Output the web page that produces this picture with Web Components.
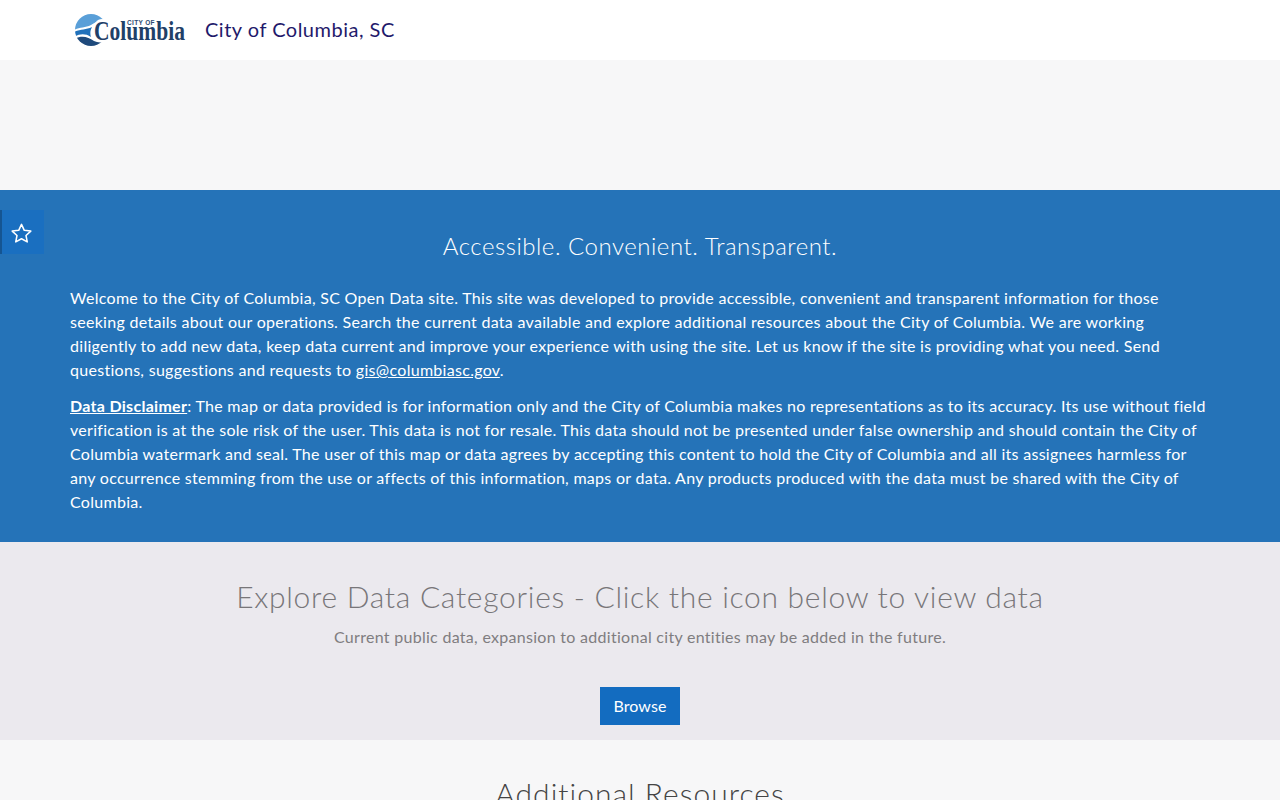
<!DOCTYPE html>
<html lang="en">
<head>
<meta charset="utf-8">
<title>City of Columbia, SC</title>
<style>
  html, body { margin: 0; padding: 0; height: 800px; overflow: hidden; background: #f7f7f8; }
  body { font-family: Lato, "Open Sans", sans-serif; }
  intro-panel a { color: #fff; text-decoration: underline; }
</style>
</head>
<body>
<site-header></site-header>
<hero-spacer></hero-spacer>
<intro-panel>
  <span slot="title">Accessible. Convenient. Transparent.</span>
  <p>Welcome to the City of Columbia, SC Open Data site. This site was developed to provide accessible, convenient and transparent information for those seeking details about our operations. Search the current data available and explore additional resources about the City of Columbia. We are working diligently to add new data, keep data current and improve your experience with using the site. Let us know if the site is providing what you need. Send questions, suggestions and requests to <a href="#">gis@columbiasc.gov</a>.</p>
  <p><a href="#"><b>Data Disclaimer</b></a>: The map or data provided is for information only and the City of Columbia makes no representations as to its accuracy. Its use without field verification is at the sole risk of the user. This data is not for resale. This data should not be presented under false ownership and should contain the City of Columbia watermark and seal. The user of this map or data agrees by accepting this content to hold the City of Columbia and all its assignees harmless for any occurrence stemming from the use or affects of this information, maps or data. Any products produced with the data must be shared with the City of Columbia.</p>
</intro-panel>
<explore-panel></explore-panel>
<resources-panel></resources-panel>

<script>
// ── header ───────────────────────────────────────────────────────────────────
class SiteHeader extends HTMLElement {
  constructor() {
    super()
    this.attachShadow({ mode: 'open' })
    this.shadowRoot.innerHTML = `
      <style>
        :host { display: flex; align-items: center; height: 60px; background: #fff; padding-left: 74px; box-sizing: border-box; }
        .logo { display: block; width: 112px; height: 34px; flex-shrink: 0; }
        .name { margin: -2px 0 0 19px; font-size: 20px; letter-spacing: .5px; color: #1f1a6b; white-space: nowrap; }
      </style>
      <svg class="logo" viewBox="0 0 112 34">
        <defs><clipPath id="disc"><circle cx="17" cy="17" r="16"/></clipPath></defs>
        <g clip-path="url(#disc)">
          <path fill="#5a9fd8" d="M0 0H34V8C27 6 22 9 17 12C11 15 5 14 0 17z"/>
          <path fill="#2171bb" d="M0 19C6 16 12 17 18 14C16 18 16 21 17 24C11 20 5 21 0 24z"/>
          <path fill="#1f4a7c" d="M0 26C8 22 14 24 20 28C24 30 30 30 34 27V34H0z"/>
        </g>
        <ellipse cx="28" cy="17" rx="9" ry="11" fill="#fff"/>
        <text x="53" y="12" font-family="Liberation Sans" font-size="6.5" font-weight="700" textLength="27.5" fill="#2c4a72">CITY OF</text>
        <text x="20" y="26.5" font-family="Liberation Serif" font-size="27" font-weight="700" textLength="91" lengthAdjust="spacingAndGlyphs" fill="#1f4068">Columbia</text>
      </svg>
      <span class="name">City of Columbia, SC</span>
    `
  }
}

class HeroSpacer extends HTMLElement {
  constructor() {
    super()
    this.attachShadow({ mode: 'open' })
    this.shadowRoot.innerHTML = `<style>:host { display: block; height: 130px; background: #f7f7f8; }</style>`
  }
}

// ── bandeau bleu ─────────────────────────────────────────────────────────────
class IntroPanel extends HTMLElement {
  constructor() {
    super()
    this.attachShadow({ mode: 'open' })
    this.shadowRoot.innerHTML = `
      <style>
        :host { display: block; position: relative; box-sizing: border-box; height: 352px; padding: 41px 70px 0; background: #2573b8; color: #fff; }
        h2 { margin: 0 0 25px; font-size: 24px; line-height: 30px; font-weight: 300; text-align: center; letter-spacing: .52px; }
        ::slotted(p) { margin: 0 0 12px; font-size: 16px; line-height: 24px; letter-spacing: .29px; }
        .fav { position: absolute; left: 0; top: 20px; width: 44px; height: 44px; box-sizing: border-box; padding: 2px 3px 0 0; display: flex; align-items: center; justify-content: center; background: #1a6fc0; border-left: 2px solid #155592; }
        .fav svg { display: block; width: 23px; height: 23px; }
      </style>
      <div class="fav">
        <svg viewBox="0 0 24 24"><path fill="none" stroke="#fff" stroke-width="1.6" stroke-linejoin="round" d="M12 2.5l2.9 6.2 6.8.8-5 4.6 1.3 6.7-6-3.3-6 3.3 1.3-6.7-5-4.6 6.8-.8z"/></svg>
      </div>
      <h2><slot name="title"></slot></h2>
      <slot></slot>
    `
  }
}

class ExplorePanel extends HTMLElement {
  constructor() {
    super()
    this.attachShadow({ mode: 'open' })
    this.shadowRoot.innerHTML = `
      <style>
        :host { display: block; box-sizing: border-box; height: 198px; padding-top: 34px; background: #ebe9ee; text-align: center; color: #787679; }
        h2 { margin: 0; font-size: 30px; line-height: 40px; font-weight: 300; letter-spacing: .7px; }
        p { margin: 10px 0 0; font-size: 16px; line-height: 22px; letter-spacing: .29px; color: #7f7d80; }
        .btn { display: inline-block; margin-top: 39px; width: 80px; height: 38px; line-height: 37px; background: #136cc0; color: #fff; font-size: 16px; letter-spacing: .1px; text-decoration: none; }
      </style>
      <h2>Explore Data Categories - Click the icon below to view data</h2>
      <p>Current public data, expansion to additional city entities may be added in the future.</p>
      <a class="btn" href="#">Browse</a>
    `
  }
}

class ResourcesPanel extends HTMLElement {
  constructor() {
    super()
    this.attachShadow({ mode: 'open' })
    this.shadowRoot.innerHTML = `
      <style>
        :host { display: block; padding-top: 33px; background: #f7f7f8; text-align: center; color: #444; }
        h2 { margin: 0; font-size: 30px; line-height: 40px; font-weight: 300; letter-spacing: 1px; }
      </style>
      <h2>Additional Resources</h2>
    `
  }
}

customElements.define('site-header', SiteHeader)
customElements.define('hero-spacer', HeroSpacer)
customElements.define('intro-panel', IntroPanel)
customElements.define('explore-panel', ExplorePanel)
customElements.define('resources-panel', ResourcesPanel)
</script>
</body>
</html>
